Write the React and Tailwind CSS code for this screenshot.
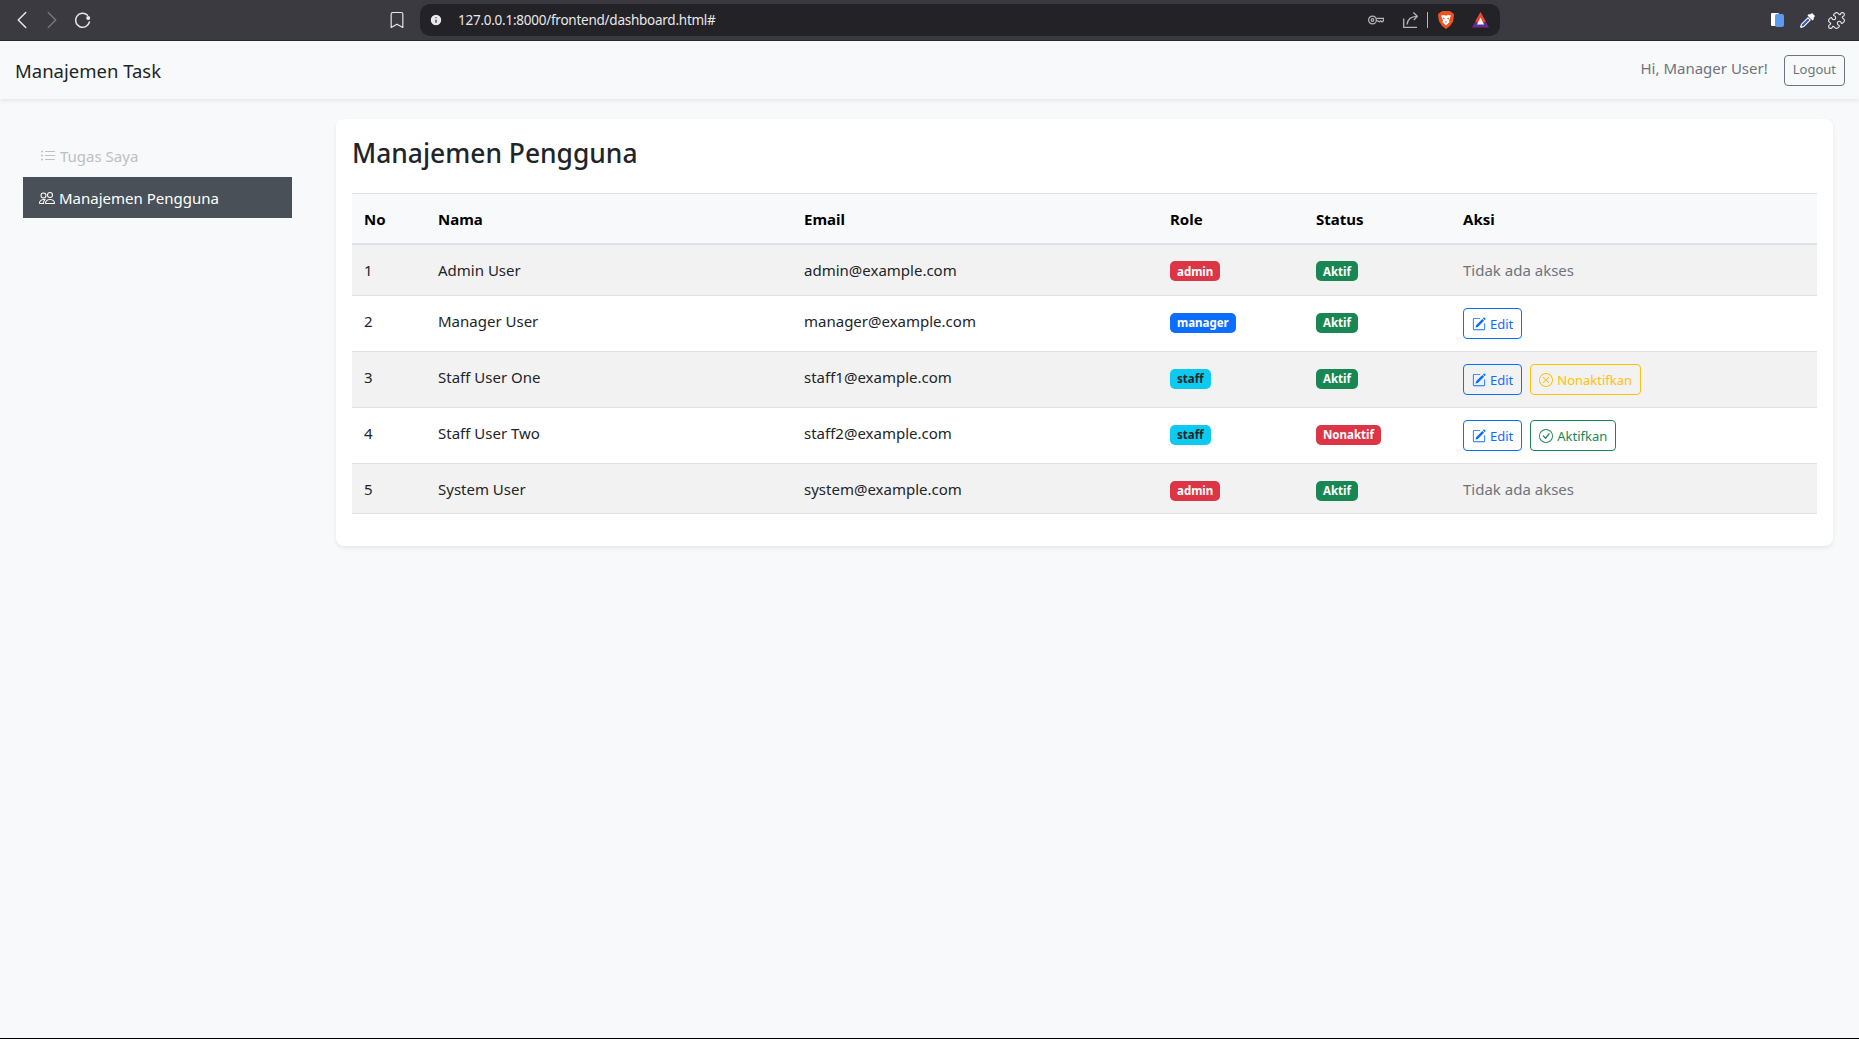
import { ChevronLeft, ChevronRight, Bookmark, Info, Puzzle } from "lucide-react";

const sans = "font-['Noto_Sans',sans-serif]";

const ListIcon = () => (
  <svg width="16" height="16" viewBox="0 0 16 16" fill="currentColor">
    <path fillRule="evenodd" d="M5 11.5a.5.5 0 0 1 .5-.5h9a.5.5 0 0 1 0 1h-9a.5.5 0 0 1-.5-.5zm0-4a.5.5 0 0 1 .5-.5h9a.5.5 0 0 1 0 1h-9a.5.5 0 0 1-.5-.5zm0-4a.5.5 0 0 1 .5-.5h9a.5.5 0 0 1 0 1h-9a.5.5 0 0 1-.5-.5zm-3 1a1 1 0 1 0 0-2 1 1 0 0 0 0 2zm0 4a1 1 0 1 0 0-2 1 1 0 0 0 0 2zm0 4a1 1 0 1 0 0-2 1 1 0 0 0 0 2z" />
  </svg>
);

const PeopleIcon = () => (
  <svg width="16" height="16" viewBox="0 0 16 16" fill="currentColor">
    <path d="M15 14s1 0 1-1-1-4-5-4-5 3-5 4 1 1 1 1h8zm-7.978-1A.261.261 0 0 1 7 12.996c.001-.264.167-1.03.76-1.72C8.312 10.629 9.282 10 11 10c1.717 0 2.687.63 3.24 1.276.593.69.758 1.457.76 1.72l-.008.002a.274.274 0 0 1-.014.002H7.022zM11 7a2 2 0 1 0 0-4 2 2 0 0 0 0 4zm3-2a3 3 0 1 1-6 0 3 3 0 0 1 6 0zM6.936 9.28a5.88 5.88 0 0 0-1.23-.247A7.35 7.35 0 0 0 5 9c-4 0-5 3-5 4 0 .667.333 1 1 1h4.216A2.238 2.238 0 0 1 5 13c0-1.01.377-2.042 1.09-2.904.243-.294.526-.569.846-.816zM4.92 10A5.493 5.493 0 0 0 4 13H1c0-.26.164-1.03.76-1.724.545-.636 1.492-1.256 3.16-1.275zM1.5 5.5a3 3 0 1 1 6 0 3 3 0 0 1-6 0zm3-2a2 2 0 1 0 0 4 2 2 0 0 0 0-4z" />
  </svg>
);

const EditIcon = () => (
  <svg width="14" height="14" viewBox="0 0 16 16" fill="currentColor">
    <path d="M15.502 1.94a.5.5 0 0 1 0 .706L14.459 3.69l-2-2L13.502.646a.5.5 0 0 1 .707 0l1.293 1.293zm-1.750 2.456-2-2L4.939 9.21a.5.5 0 0 0-.121.196l-.805 2.414a.25.25 0 0 0 .316.316l2.414-.805a.5.5 0 0 0 .196-.12l6.813-6.814z" />
    <path fillRule="evenodd" d="M1 13.5A1.5 1.5 0 0 0 2.5 15h11a1.5 1.5 0 0 0 1.5-1.5v-6a.5.5 0 0 0-1 0v6a.5.5 0 0 1-.5.5h-11a.5.5 0 0 1-.5-.5v-11a.5.5 0 0 1 .5-.5H9a.5.5 0 0 0 0-1H2.5A1.5 1.5 0 0 0 1 2.5v11z" />
  </svg>
);

const XCircleIcon = () => (
  <svg width="14" height="14" viewBox="0 0 16 16" fill="currentColor">
    <path d="M8 15A7 7 0 1 1 8 1a7 7 0 0 1 0 14zm0 1A8 8 0 1 0 8 0a8 8 0 0 0 0 16z" />
    <path d="M4.646 4.646a.5.5 0 0 1 .708 0L8 7.293l2.646-2.647a.5.5 0 0 1 .708.708L8.707 8l2.647 2.646a.5.5 0 0 1-.708.708L8 8.707l-2.646 2.647a.5.5 0 0 1-.708-.708L7.293 8 4.646 5.354a.5.5 0 0 1 0-.708z" />
  </svg>
);

const CheckCircleIcon = () => (
  <svg width="14" height="14" viewBox="0 0 16 16" fill="currentColor">
    <path d="M8 15A7 7 0 1 1 8 1a7 7 0 0 1 0 14zm0 1A8 8 0 1 0 8 0a8 8 0 0 0 0 16z" />
    <path d="M10.97 4.97a.235.235 0 0 0-.02.022L7.477 9.417 5.384 7.323a.75.75 0 0 0-1.06 1.06L6.970 11.030a.75.75 0 0 0 1.079-.02l3.992-4.990a.75.75 0 0 0-1.071-1.050z" />
  </svg>
);

const ReloadIcon = () => (
  <svg width="17" height="17" viewBox="0 0 17 17" fill="none" className="ml-[7px]">
    <path d="M13.500 3.300A7 7 0 1 0 15.400 10" stroke="#e8e8ea" strokeWidth="1.5" strokeLinecap="round" />
    <circle cx="14.200" cy="6" r="2" fill="#e8e8ea" />
  </svg>
);

const KeyIcon = () => (
  <svg width="16" height="10" viewBox="0 0 16 10" fill="none" stroke="#b5b5b8" strokeWidth="1.200" className="mr-[19px]">
    <circle cx="4.500" cy="5" r="3.900" />
    <circle cx="4.500" cy="5" r="1.300" />
    <path d="M8.400 3.300H15.500V5.800L14 7 12.700 5.900 11.400 7 10 5.900H8.400" />
  </svg>
);

const ShareIcon = () => (
  <svg width="15" height="16" viewBox="0 0 15 16" fill="none" stroke="#b5b5b8" strokeWidth="1.300" className="mr-[9px]">
    <path d="M.7 6.500V15.300H14" />
    <path d="M4 12.500C4.500 7.500 8 4.500 14 4.300" />
    <path d="M10.300.6 14.300 4.200 10.800 8" />
  </svg>
);

const BraveIcon = () => (
  <svg width="16" height="18" viewBox="0 0 16 18">
    <path d="M3 .8 5 0h6l2 .8 2.300 1.700.7 1.500-.9 6.500L12 15l-4 3-4-3-3.100-5L0 4l.7-1.500z" fill="#f0531f" />
    <path d="M3 4.500 6 4l2 .8L10 4l3 .5-1.200 3-.8 2 .6 1.500L8 14.500 4.400 11 5 9.500l-.8-2z" fill="#fff" />
    <path d="M4.900 6.500 7 7.600 5.500 8.500zM11.100 6.500 9 7.600 10.500 8.500zM6.800 10.500H9.200L8 12z" fill="#f0531f" />
  </svg>
);

const RewardsIcon = () => (
  <svg width="17" height="16" viewBox="0 0 17 16">
    <path d="M8.500 0 17 15.500H0z" fill="#662d91" />
    <path d="M8.500 0 13.600 9.300 8.500 12 3.400 9.300z" fill="#f1452c" />
    <path d="M8.500 5.500 12 12.500H5z" fill="#fff" />
  </svg>
);

const DropperIcon = () => (
  <svg width="15" height="15" viewBox="0 0 15 15" className="ml-[16px]">
    <path d="M10 1.500 12 0 15 3 13.500 5 14 6 12.500 7.500 7.500 2.500 9 1z" fill="#fff" />
    <path d="M8 4 11 7 4 14 1 15 0 14 1 11z" fill="#fff" />
    <path d="M8 5.500 9.500 7 3.500 13 2 13.500 1.500 13 2 11.500z" fill="#2f55c8" />
  </svg>
);

const BrowserBar = () => (
  <div className="flex h-[41px] shrink-0 items-center border-b border-[#29282d] bg-[#3b3a40] text-[#e8e8ea]">
    <ChevronLeft size={30} strokeWidth={1.200} className="ml-[7px]" />
    <ChevronRight size={30} strokeWidth={1.200} className="text-[#77767b]" />
    <ReloadIcon />
    <Bookmark size={20} strokeWidth={1.400} className="ml-[296px]" />
    <div className="ml-[13px] flex h-[32px] w-[1080px] items-center rounded-[10px] bg-[#232227] pl-[9px] pr-[11px]">
      <Info size={14} fill="#e8e8ea" stroke="#232227" strokeWidth={2} />
      <span className={`ml-[15px] text-[13.500px] tracking-[-0.25px] text-[#e8e8ea] ${sans}`}>127.0.0.1:8000/frontend/dashboard.html#</span>
      <div className="ml-auto flex items-center">
        <KeyIcon />
        <ShareIcon />
        <div className="mr-[10px] h-[16px] w-px bg-[#b5b5b8]" />
        <BraveIcon />
        <div className="ml-[18px]">
          <RewardsIcon />
        </div>
      </div>
    </div>
    <div className="ml-auto mr-[13px] flex items-center">
      <div className="relative h-[14px] w-[13px]">
        <div className="absolute left-0 top-0 h-[13px] w-[8px] rounded-[1px] bg-white" />
        <div className="absolute right-0 top-[1px] h-[13px] w-[9px] rounded-[2px] bg-[#5a9bf0]" />
      </div>
      <DropperIcon />
      <Puzzle size={19} strokeWidth={1.400} className="ml-[12px]" />
    </div>
  </div>
);

const Badge = ({ color, children }) => (
  <span className={`inline-flex h-[20px] items-center rounded-[5px] px-[7px] text-[11.500px] font-bold leading-none ${color}`}>{children}</span>
);

const roleColor = {
  admin: "bg-[#dc3545] text-white",
  manager: "bg-[#0d6efd] text-white",
  staff: "bg-[#0dcaf0] text-[#212529]",
};

const EditBtn = () => (
  <button className="inline-flex h-[31px] items-center gap-[4px] rounded-[4px] border border-[#0d6efd] px-[8px] text-[13px] text-[#0d6efd]">
    <EditIcon /> Edit
  </button>
);

const users = [
  { no: 1, name: "Admin User", email: "admin@example.com", role: "admin", active: true, actions: "none", h: "h-[52px]" },
  { no: 2, name: "Manager User", email: "manager@example.com", role: "manager", active: true, actions: "edit", h: "h-[56px]" },
  { no: 3, name: "Staff User One", email: "staff1@example.com", role: "staff", active: true, actions: "off", h: "h-[56px]" },
  { no: 4, name: "Staff User Two", email: "staff2@example.com", role: "staff", active: false, actions: "on", h: "h-[56px]" },
  { no: 5, name: "System User", email: "system@example.com", role: "admin", active: true, actions: "none", h: "h-[50px]" },
];

const UserRow = ({ user, striped }) => (
  <tr className={`${user.h} border-b border-[#dee2e6] text-[15px] leading-[24px] text-[#212529] ${striped ? "bg-[#f2f2f2]" : "bg-white"}`}>
    <td className="px-3 pt-[13px] align-top">{user.no}</td>
    <td className="px-3 pt-[13px] align-top">{user.name}</td>
    <td className="px-3 pt-[13px] align-top">{user.email}</td>
    <td className="px-3 pt-[13px] align-top">
      <Badge color={roleColor[user.role]}>{user.role}</Badge>
    </td>
    <td className="px-3 pt-[13px] align-top">
      <Badge color={user.active ? "bg-[#198754] text-white" : "bg-[#dc3545] text-white"}>{user.active ? "Aktif" : "Nonaktif"}</Badge>
    </td>
    <td className={`px-3 align-top ${user.actions === "none" ? "pt-[13px]" : "pt-[12px]"}`}>
      {user.actions === "none" ? (
        <span className="text-[#6c757d]">Tidak ada akses</span>
      ) : (
        <div className="flex gap-[8px]">
          <EditBtn />
          {user.actions === "off" && (
            <button className="inline-flex h-[31px] items-center gap-[4px] rounded-[4px] border border-[#ffc107] px-[8px] text-[13px] text-[#ffc107]">
              <XCircleIcon /> Nonaktifkan
            </button>
          )}
          {user.actions === "on" && (
            <button className="inline-flex h-[31px] items-center gap-[4px] rounded-[4px] border border-[#198754] px-[8px] text-[13px] text-[#198754]">
              <CheckCircleIcon /> Aktifkan
            </button>
          )}
        </div>
      )}
    </td>
  </tr>
);

function App() {
  return (
    <div className={`flex h-[1039px] flex-col overflow-hidden bg-[#f8f9fa] ${sans}`}>
      <BrowserBar />
      <nav className="flex h-[58px] shrink-0 items-center justify-between bg-[#f8f9fa] pl-[15px] pr-[14px] shadow-[0_2px_4px_rgba(0,0,0,0.075)]">
        <span className="pt-[1px] text-[18.500px] text-[#212529]">Manajemen Task</span>
        <div className="flex items-center">
          <span className="mb-[3px] mr-[16px] text-[15px] text-[#6c757d]">Hi, Manager User!</span>
          <button className="h-[31px] rounded-[4px] border border-[#6c757d] px-[8px] text-[13px] text-[#6c757d]">Logout</button>
        </div>
      </nav>
      <div className="flex flex-1 pt-[20px]">
        <aside className="w-[336px] shrink-0 pl-[23px] pr-[44px] pt-[16px]">
          <div className="flex h-[41px] items-center gap-[4px] pl-[17px] pt-[1px] text-[15px] text-[#bcc0c4]">
            <ListIcon /> Tugas Saya
          </div>
          <div className="mt-[1px] flex h-[41px] items-center gap-[4px] bg-[#495057] pl-[16px] pt-[1px] text-[15px] text-white">
            <PeopleIcon /> Manajemen Pengguna
          </div>
        </aside>
        <main className="mr-[26px] h-[427px] flex-1 rounded-[8px] bg-white px-[16px] pt-[14px] shadow-[0_2px_4px_rgba(0,0,0,0.075)]">
          <h2 className="mb-[20px] text-[26.400px] font-medium leading-[40px] text-[#212529]">Manajemen Pengguna</h2>
          <table className="w-full table-fixed border-collapse">
            <colgroup>
              <col className="w-[74px]" />
              <col className="w-[366px]" />
              <col className="w-[366px]" />
              <col className="w-[146px]" />
              <col className="w-[147px]" />
              <col />
            </colgroup>
            <thead>
              <tr className="h-[50px] border-t border-b-2 border-t-[#dee2e6] border-b-[#dee2e6] bg-[#f8f9fa] text-left text-[15px] text-black">
                <th className="px-3 pt-[1px] font-bold">No</th>
                <th className="px-3 pt-[1px] font-bold">Nama</th>
                <th className="px-3 pt-[1px] font-bold">Email</th>
                <th className="px-3 pt-[1px] font-bold">Role</th>
                <th className="px-3 pt-[1px] font-bold">Status</th>
                <th className="px-3 pt-[1px] font-bold">Aksi</th>
              </tr>
            </thead>
            <tbody>
              {users.map((user, i) => (
                <UserRow key={user.no} user={user} striped={i % 2 === 0} />
              ))}
            </tbody>
          </table>
        </main>
      </div>
      <div className="h-px shrink-0 bg-black" />
    </div>
  );
}

export default App;
